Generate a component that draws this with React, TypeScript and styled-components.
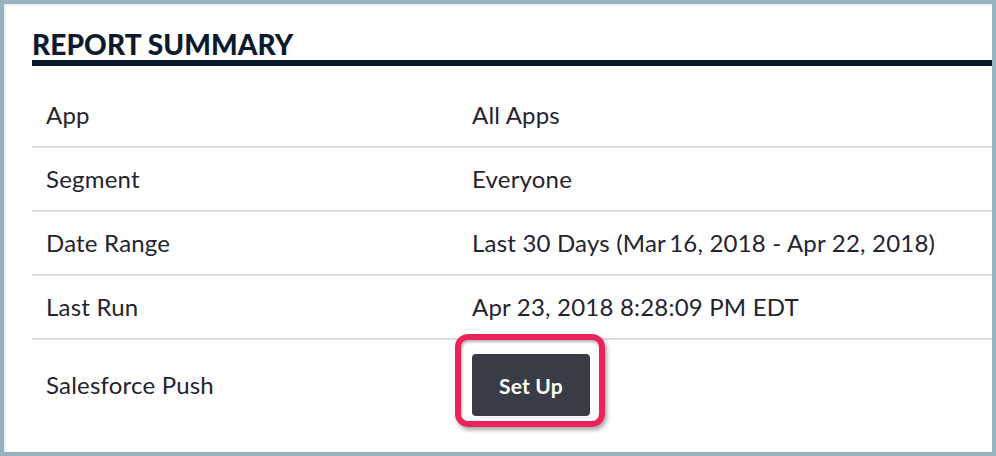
import React from "react";
import styled, { createGlobalStyle } from "styled-components";

const Global = createGlobalStyle`
  html, body { margin: 0; padding: 0; background: #97b2c0; }
  body { font-family: "Lato", "Open Sans", sans-serif; }
`;

const Frame = styled.div`
  width: 996px;
  height: 456px;
  box-sizing: border-box;
  border: 4px solid #97b2c0;
  background: #ffffff;
  box-shadow: inset 2px 2px 0 #eeeef1;
  padding: 0 0 0 28px;
  overflow: hidden;
`;

const Title = styled.h2`
  margin: 0;
  padding-top: 24px;
  height: 32px;
  font-size: 28px;
  line-height: 32px;
  font-weight: 900;
  color: #0b1a2d;
  letter-spacing: 0.1px;
  border-bottom: 6px solid #0a192d;
`;

const Table = styled.div`
  margin-top: 18px;
  display: flex;
  flex-direction: column;
`;

const Row = styled.div<{ $tall?: boolean }>`
  display: grid;
  grid-template-columns: 428px 1fr;
  align-items: center;
  height: ${(p) => (p.$tall ? "112px" : "62px")};
  border-bottom: ${(p) => (p.$tall ? "none" : "2px solid #d9dce5")};
  font-size: 24px;
  letter-spacing: 0.2px;
  color: #1f2430;
`;

const Label = styled.div<{ $top?: boolean }>`
  padding-left: 14px;
  margin-top: -1px;
  ${(p) => (p.$top ? "align-self: start; padding-top: 31px;" : "")}
`;

const Value = styled.div`
  padding-left: 12px;
  margin-top: -1px;
`;

const ButtonCell = styled.div`
  padding-left: 12px;
  display: flex;
  align-items: flex-start;
  align-self: start;
  padding-top: 14px;
`;

const Highlight = styled.div`
  position: relative;
  &::before {
    content: "";
    position: absolute;
    left: -17px;
    top: -20px;
    width: 138px;
    height: 81px;
    border: 6px solid #e8245a;
    border-radius: 13px;
    box-shadow: 2px 3px 4px rgba(0, 0, 0, 0.35),
      inset 1px 2px 3px rgba(0, 0, 0, 0.3);
    pointer-events: none;
  }
`;

const Button = styled.button`
  width: 118px;
  height: 62px;
  border: none;
  border-radius: 4px;
  background: #393b45;
  color: #ffffff;
  font-family: "Lato", "Open Sans", sans-serif;
  font-size: 21px;
  font-weight: 700;
  letter-spacing: 0.2px;
  padding: 0;
  cursor: pointer;
`;

const rows: [string, string][] = [
  ["App", "All Apps"],
  ["Segment", "Everyone"],
  ["Date Range", "Last 30 Days (Mar\u200916, 2018 - Apr 22, 2018)"],
  ["Last Run", "Apr 23, 2018 8:28:09 PM EDT"],
];

export default function App() {
  return (
    <>
      <Global />
      <Frame>
        <Title>REPORT SUMMARY</Title>
        <Table>
          {rows.map(([k, v]) => (
            <Row key={k}>
              <Label>{k}</Label>
              <Value>{v}</Value>
            </Row>
          ))}
          <Row $tall>
            <Label $top>Salesforce Push</Label>
            <ButtonCell>
              <Highlight>
                <Button>Set Up</Button>
              </Highlight>
            </ButtonCell>
          </Row>
        </Table>
      </Frame>
    </>
  );
}
